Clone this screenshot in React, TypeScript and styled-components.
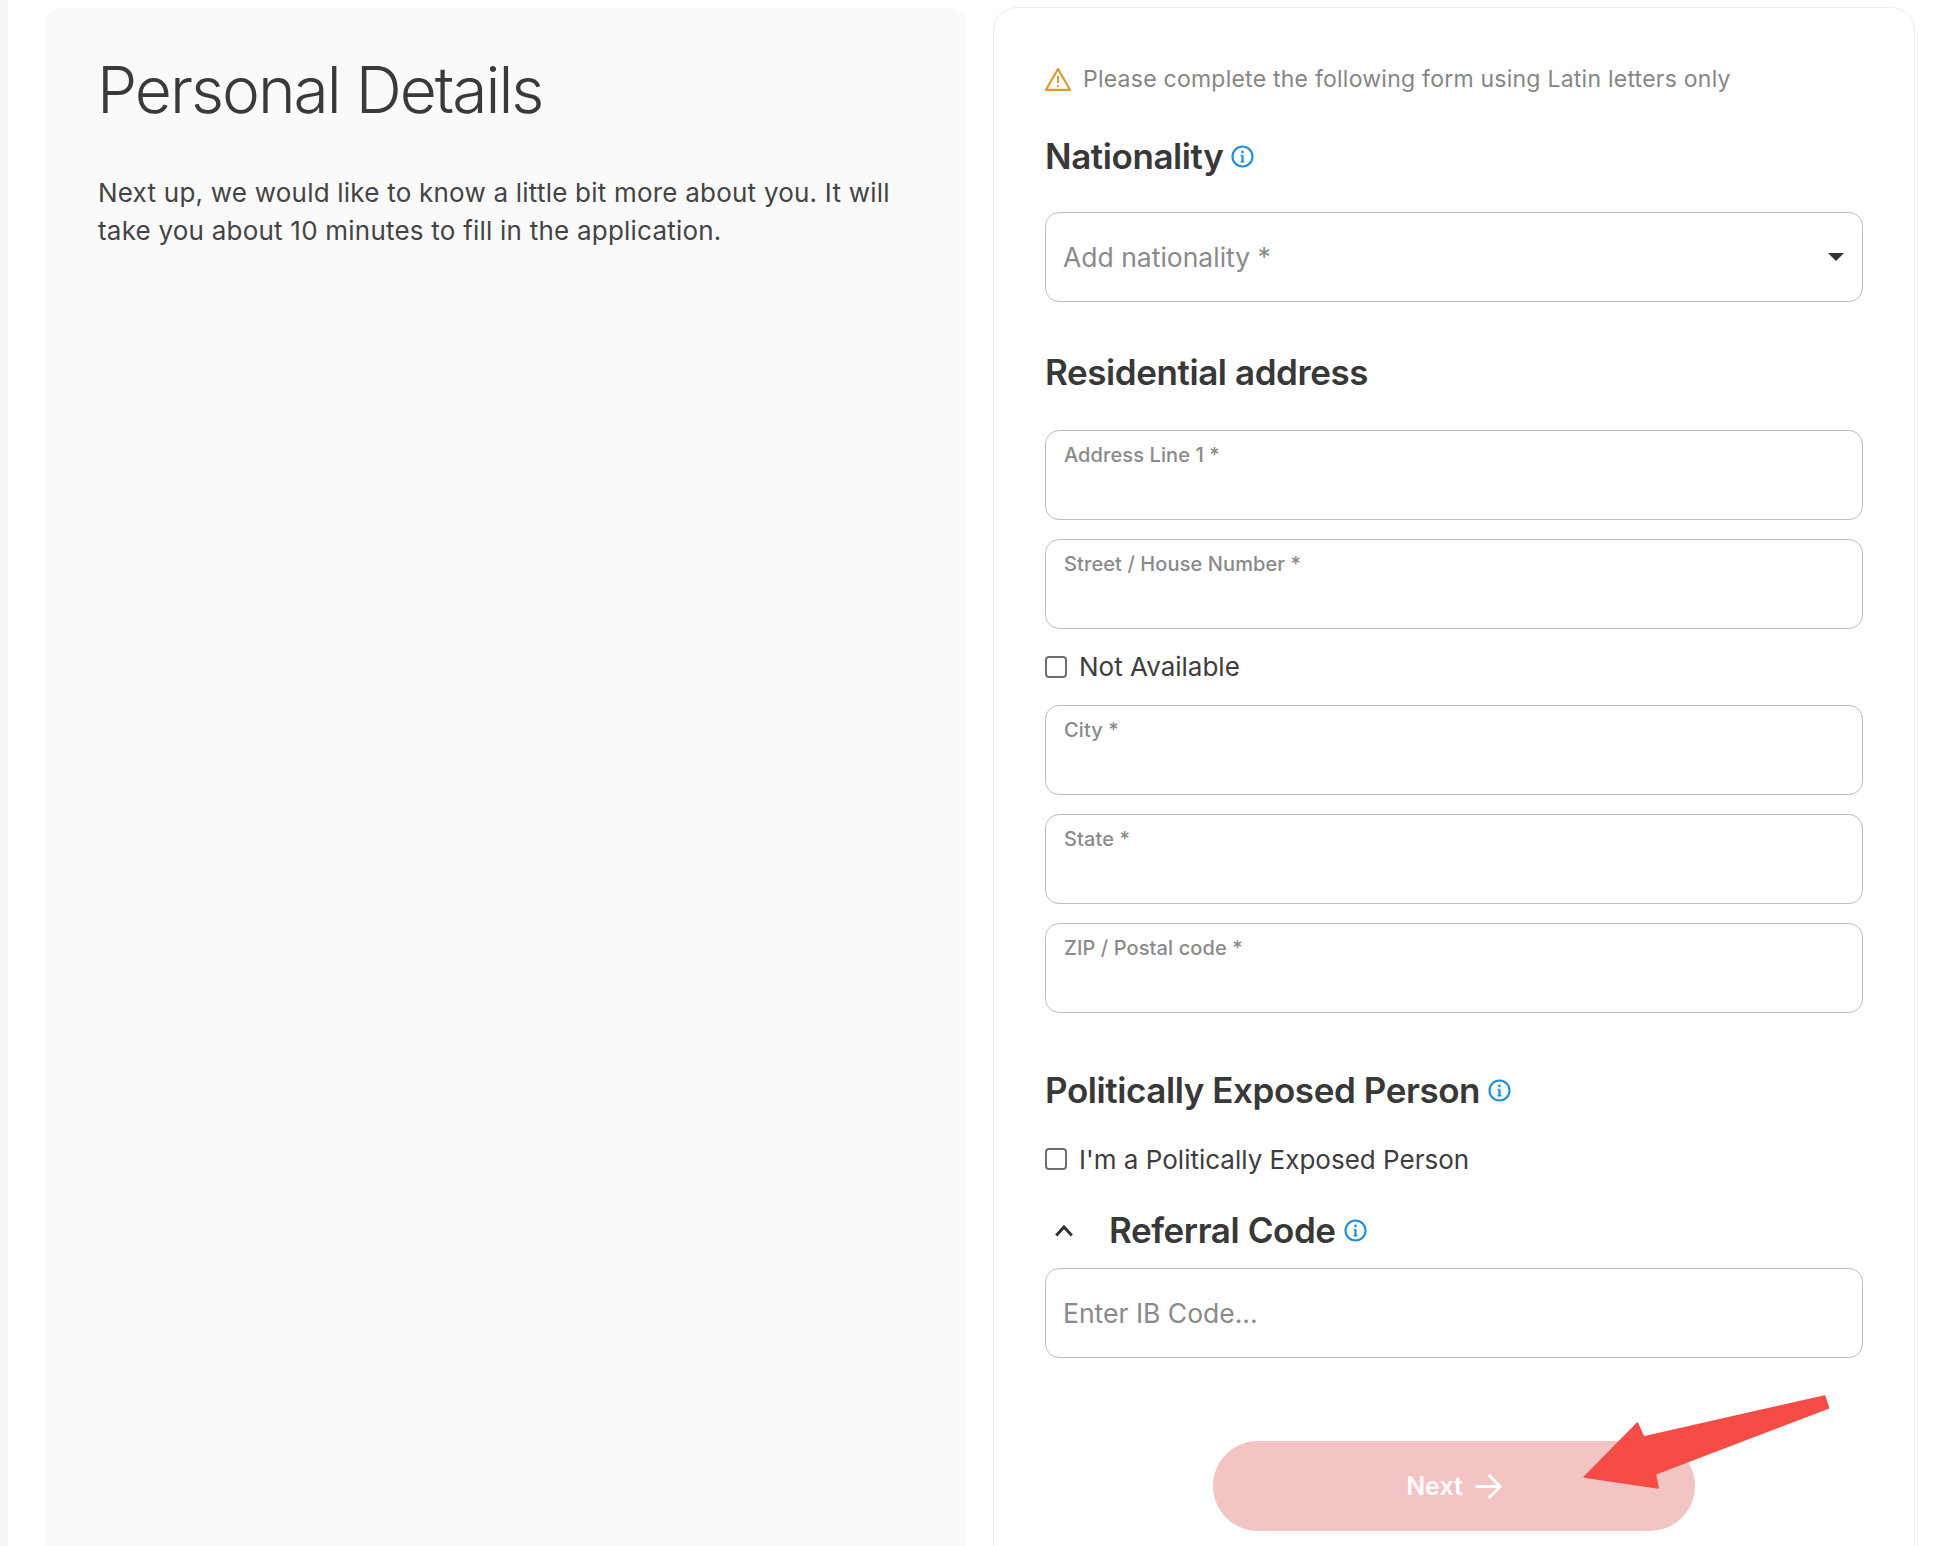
import React from "react";
import styled, { createGlobalStyle } from "styled-components";

const Global = createGlobalStyle`
  html, body { margin: 0; padding: 0; background: #fff; }
  * { box-sizing: border-box; }
`;

const Page = styled.div`
  width: 1939px;
  height: 1546px;
  overflow: hidden;
  position: relative;
  display: flex;
  font-family: Inter, "Liberation Sans", sans-serif;
  color: #3a3a3a;
  background: #fff;
`;
const EdgeStrip = styled.div`
  width: 8px;
  flex: none;
  background: #f8f8f8;
`;
const IntroPanel = styled.aside`
  width: 920px;
  flex: none;
  margin: 8px 0 -40px 38px;
  padding: 43px 52px 0;
  background: #fafafa;
  border-radius: 16px;
`;
const Title = styled.h1`
  margin: 0 0 0 -1px;
  font-size: 64px;
  line-height: 78px;
  font-weight: 300;
  letter-spacing: -2px;
  color: #3a3a3a;
`;
const Intro = styled.p`
  margin: 45px 0 0;
  font-size: 26px;
  line-height: 38px;
  font-weight: 400;
  letter-spacing: 0.22px;
  color: #444;
`;
const FormCard = styled.main`
  width: 922px;
  flex: none;
  margin: 7px 0 -40px 27px;
  padding: 53px 51px 0;
  background: #fff;
  border: 1px solid #ededed;
  border-radius: 24px;
`;
const Notice = styled.div`
  display: flex;
  align-items: center;
  gap: 12px;
  height: 36px;
  font-size: 23px;
  letter-spacing: 0.24px;
  color: #868686;
`;
const Heading = styled.h2<{ $top: number }>`
  display: flex;
  align-items: center;
  gap: 8px;
  height: 48px;
  margin: ${(p) => p.$top}px 0 0;
  font-size: 35px;
  font-weight: 600;
  letter-spacing: -0.42px;
  color: #383838;
`;
const HeadingText = styled.span<{ $indent?: boolean }>`
  margin-left: ${(p) => (p.$indent ? "28px" : "0")};
`;
const Box = styled.div<{ $top: number; $large?: boolean }>`
  display: flex;
  align-items: ${(p) => (p.$large ? "center" : "flex-start")};
  justify-content: space-between;
  height: ${(p) => (p.$large ? "90px" : "89.5px")};
  margin-top: ${(p) => p.$top}px;
  padding: ${(p) => (p.$large ? "0 18px 0 17px" : "12px 18px 0")};
  border: 1.5px solid #bdbdbd;
  border-radius: 14px;
  background: #fff;
  color: #8a8a8a;
  font-size: ${(p) => (p.$large ? "26.5px" : "20px")};
  font-weight: ${(p) => (p.$large ? 400 : 500)};
  letter-spacing: ${(p) => (p.$large ? "0" : "0.1px")};
`;
const Caret = styled.span`
  width: 0;
  height: 0;
  border-left: 8px solid transparent;
  border-right: 8px solid transparent;
  border-top: 8px solid #333;
`;
const CheckRow = styled.label<{ $top: number; $bottom: number }>`
  display: flex;
  align-items: center;
  gap: 12px;
  height: 38px;
  margin: ${(p) => p.$top}px 0 ${(p) => p.$bottom}px;
  font-size: 26px;
  letter-spacing: 0;
  color: #3d3d3d;
`;
const Check = styled.span`
  width: 22px;
  height: 22px;
  flex: none;
  border: 2px solid #6e6e6e;
  border-radius: 4px;
  background: #fff;
`;
const ButtonRow = styled.div`
  display: flex;
  justify-content: center;
  margin-top: 83px;
`;
const NextButton = styled.button`
  display: flex;
  align-items: center;
  justify-content: center;
  gap: 12px;
  width: 482px;
  height: 90px;
  border: 0;
  border-radius: 45px;
  background: #f2c4c4;
  color: #fff;
  font-family: inherit;
  font-size: 25px;
  font-weight: 600;
`;
const Annotation = styled.svg`
  position: absolute;
  left: 0;
  top: 0;
  pointer-events: none;
`;

const Info = () => (
  <svg width="23" height="23" viewBox="0 0 22 22" fill="none" stroke="#1f8fdc" style={{ flex: "none" }}>
    <circle cx="11" cy="11" r="9.6" strokeWidth="2" />
    <path d="M11 10v6" strokeWidth="2.2" />
    <path d="M9.2 10H11M9.2 16h3.6" strokeWidth="1.3" />
    <circle cx="11" cy="6.6" r="1.3" fill="#1f8fdc" stroke="none" />
  </svg>
);
const Warn = () => (
  <svg width="26" height="24" viewBox="0 0 26 24" fill="none" style={{ flex: "none" }}>
    <path d="M13 2 L25 22.8 H1 Z" stroke="#e09a2b" strokeWidth="2.2" strokeLinejoin="round" />
    <path d="M13 9v7" stroke="#e09a2b" strokeWidth="2" />
    <circle cx="13" cy="19" r="1.2" fill="#e09a2b" />
  </svg>
);
const Chevron = () => (
  <svg width="18" height="13" viewBox="0 0 18 13" fill="none" stroke="#333" strokeWidth="3" style={{ marginLeft: 10, flex: "none" }}>
    <path d="M1.2 11.5 L9 3 L16.8 11.5" />
  </svg>
);
const ArrowRight = () => (
  <svg width="27" height="25" viewBox="0 0 27 25" fill="none" stroke="#fff" strokeWidth="2.8" strokeLinecap="round" strokeLinejoin="round">
    <path d="M1.5 12.5 H25 M14.5 1.8 L25.3 12.5 L14.5 23.2" />
  </svg>
);

export default function App() {
  return (
    <Page>
      <Global />
      <EdgeStrip />
      <IntroPanel>
        <Title>Personal Details</Title>
        <Intro>
          Next up, we would like to know a little bit more about you. It will take you about 10 minutes to fill in the application.
        </Intro>
      </IntroPanel>
      <FormCard>
        <Notice>
          <Warn />
          Please complete the following form using Latin letters only
        </Notice>
        <Heading $top={35}>
          Nationality
          <Info />
        </Heading>
        <Box $top={32} $large>
          Add nationality *
          <Caret />
        </Box>
        <Heading $top={46}>Residential address</Heading>
        <Box $top={34}>Address Line 1 *</Box>
        <Box $top={19.5}>Street / House Number *</Box>
        <CheckRow $top={19} $bottom={19.5}>
          <Check />
          Not Available
        </CheckRow>
        <Box $top={0}>City *</Box>
        <Box $top={19.5}>State *</Box>
        <Box $top={19.5}>ZIP / Postal code *</Box>
        <Heading $top={53.5}>
          Politically Exposed Person
          <Info />
        </Heading>
        <CheckRow $top={26} $bottom={28}>
          <Check />
          I'm a Politically Exposed Person
        </CheckRow>
        <Heading $top={0}>
          <Chevron />
          <HeadingText $indent>Referral Code</HeadingText>
          <Info />
        </Heading>
        <Box $top={14} $large>
          Enter IB Code...
        </Box>
        <ButtonRow>
          <NextButton>
            Next
            <ArrowRight />
          </NextButton>
        </ButtonRow>
      </FormCard>
      <Annotation width="1939" height="1546" viewBox="0 0 1939 1546">
        <polygon
          points="1824.7,1396 1828.6,1408 1655.3,1474 1658.2,1488 1584.2,1477 1637.4,1423 1643.7,1437"
          fill="#f54c45"
          stroke="#f54c45"
          strokeWidth="1.5"
          strokeLinejoin="round"
        />
      </Annotation>
    </Page>
  );
}
